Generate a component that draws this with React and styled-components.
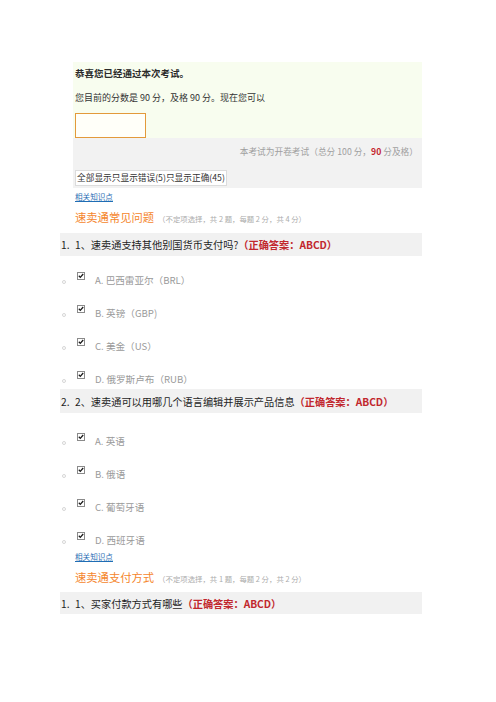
import React from "react";
import styled, { createGlobalStyle } from "styled-components";

const GlobalStyle = createGlobalStyle`
	body {
		margin: 0;
		background: #ffffff;
		font-family: "Noto Sans CJK SC", "Noto Sans", sans-serif;
	}
`;

const Page = styled.div`
	width: 362px;
	padding: 62px 0 40px 60px;
`;

const ResultPanel = styled.div`
	margin-left: 13px;
	padding: 4px 0 0 2px;
	background: #f8fdef;
`;

const Congrats = styled.div`
	font-size: 9.5px;
	line-height: 14px;
	font-weight: 700;
	color: #2a2a2a;
`;

const ScoreLine = styled.div`
	margin-top: 11px;
	font-size: 9px;
	line-height: 14px;
	color: #333333;
`;

const ActionBox = styled.div`
	margin-top: 8px;
	width: 69px;
	height: 23px;
	border: 1px solid #e39a3b;
	background: #fffff9;
`;

const InfoPanel = styled.div`
	margin-left: 13px;
	padding: 7px 4px 2px 2px;
	background: #f2f2f2;
`;

const InfoText = styled.div`
	text-align: right;
	font-size: 8.7px;
	line-height: 14px;
	color: #a0a0a0;
`;

const PassMark = styled.b`
	color: #c4262e;
`;

const FilterButton = styled.div`
	margin-top: 11px;
	display: inline-block;
	height: 16px;
	padding: 0 1px;
	box-sizing: border-box;
	border: 1px solid #dcdcdc;
	background: #ffffff;
	font-size: 8.7px;
	line-height: 14px;
	color: #333333;
`;

const KnowledgeLink = styled.a`
	display: block;
	margin: ${(p) => p.$top}px 0 0 15px;
	width: max-content;
	height: 12px;
	font-size: 7.6px;
	line-height: 12px;
	color: #1f6db4;
	text-decoration: underline;
`;

const SectionTitle = styled.div`
	display: flex;
	align-items: baseline;
	margin: 5px 0 0 15px;
	height: 18px;
	line-height: 18px;
	white-space: nowrap;
`;

const TitleMain = styled.span`
	font-size: 11.3px;
	color: #f5862d;
`;

const TitleNote = styled.span`
	margin-left: 4px;
	font-size: 7.4px;
	color: #acacac;
`;

const QuestionBar = styled.div`
	margin-top: ${(p) => p.$top}px;
	display: flex;
	height: ${(p) => p.$h}px;
	align-items: center;
	background: #f1f1f1;
	font-size: 10.2px;
	color: #1e1e1e;
	white-space: nowrap;
`;

const QNum = styled.span`
	width: 15px;
	padding-left: 1px;
	box-sizing: border-box;
`;

const Answer = styled.span`
	font-weight: 700;
	color: #c1272d;
`;

const OptionList = styled.div`
	padding: ${(p) => p.$top}px 0 3px;
	display: flex;
	flex-direction: column;
	gap: 19px;
`;

const OptionRow = styled.div`
	display: flex;
	align-items: flex-start;
	height: 14px;
`;

const Dot = styled.span`
	margin: 7px 0 0 2px;
	width: 4px;
	height: 4px;
	box-sizing: border-box;
	border: 1px solid #d6d6d6;
	border-radius: 50%;
`;

const CheckBox = styled.svg`
	margin: -1px 0 0 11px;
	flex: none;
`;

const OptionText = styled.span`
	margin-left: 10px;
	font-size: 9.6px;
	line-height: 14px;
	color: #9a9a9a;
`;

const Check = () => (
	<CheckBox width="8" height="8" viewBox="0 0 8 8">
		<rect x="0.5" y="0.5" width="7" height="7" fill="#ffffff" stroke="#8a8a8a" />
		<path d="M1.8 3.8 L3.3 5.4 L6.2 2" fill="none" stroke="#1a1a1a" strokeWidth="1.3" />
	</CheckBox>
);

const sections = [
	{
		linkTop: 3,
		title: "速卖通常见问题",
		note: "（不定项选择，共 2 题，每题 2 分，共 4 分）",
		questions: [
			{
				no: "1.",
				text: "1、速卖通支持其他别国货币支付吗?",
				bar: 23,
				top: 7,
				optTop: 17,
				options: ["A. 巴西雷亚尔（BRL）", "B. 英镑（GBP)", "C. 美金（US）", "D. 俄罗斯卢布（RUB）"],
			},
			{
				no: "2.",
				text: "2、速卖通可以用哪几个语言编辑并展示产品信息",
				bar: 24,
				top: 0,
				optTop: 21,
				options: ["A. 英语", "B. 俄语", "C. 葡萄牙语", "D. 西班牙语"],
			},
		],
	},
	{
		linkTop: 1,
		title: "速卖通支付方式",
		note: "（不定项选择，共 1 题，每题 2 分，共 2 分）",
		questions: [
			{
				no: "1.",
				text: "1、买家付款方式有哪些",
				bar: 22,
				top: 6,
				options: [],
			},
		],
	},
];

export default function App() {
	return (
		<>
			<GlobalStyle />
			<Page>
				<ResultPanel>
					<Congrats>恭喜您已经通过本次考试。</Congrats>
					<ScoreLine>您目前的分数是 90 分，及格 90 分。现在您可以</ScoreLine>
					<ActionBox />
				</ResultPanel>
				<InfoPanel>
					<InfoText>
						本考试为开卷考试（总分 100 分，<PassMark>90</PassMark> 分及格）
					</InfoText>
					<FilterButton>全部显示只显示错误(5)只显示正确(45)</FilterButton>
				</InfoPanel>

				{sections.map((s) => (
					<div key={s.title}>
						<KnowledgeLink href="#" $top={s.linkTop}>
							相关知识点
						</KnowledgeLink>
						<SectionTitle>
							<TitleMain>{s.title}</TitleMain>
							<TitleNote>{s.note}</TitleNote>
						</SectionTitle>
						{s.questions.map((q) => (
							<div key={q.text}>
								<QuestionBar $top={q.top} $h={q.bar}>
									<QNum>{q.no}</QNum>
									<span>{q.text}</span>
									<Answer>（正确答案：ABCD）</Answer>
								</QuestionBar>
								{q.options.length > 0 && (
									<OptionList $top={q.optTop}>
										{q.options.map((o) => (
											<OptionRow key={o}>
												<Dot />
												<Check />
												<OptionText>{o}</OptionText>
											</OptionRow>
										))}
									</OptionList>
								)}
							</div>
						))}
					</div>
				))}
			</Page>
		</>
	);
}
